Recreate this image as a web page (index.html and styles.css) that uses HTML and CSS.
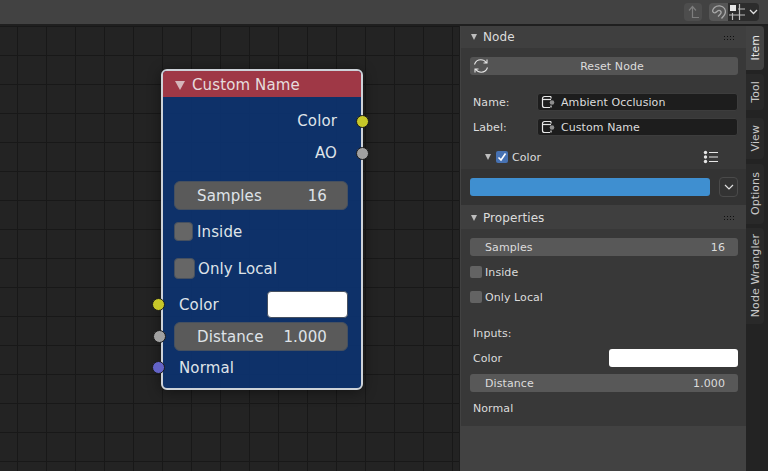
FILE: index.html
```html
<!DOCTYPE html>
<html lang="en">
<head>
<meta name="viewport" content="width=device-width, initial-scale=1">
<title>Node Editor</title>
<link rel="stylesheet" href="styles.css">
</head>
<body>
<svg class="defs" width="0" height="0">
    <symbol id="icon-node" viewBox="0 0 14 14">
        <path d="M10 1.5H3.5a2 2 0 0 0-2 2v7a2 2 0 0 0 2 2H9" fill="none" stroke="#e6e6e6" stroke-width="1.2"/>
        <path d="M2 4.5H10" fill="none" stroke="#e6e6e6" stroke-width="1.2"/>
        <path d="M10 1.5V3.5M10 10.5V12.5" fill="none" stroke="#e6e6e6" stroke-width="1.2"/>
        <circle cx="11" cy="7.5" r="2.3" fill="#8f8f8f"/>
    </symbol>
</svg>

<header class="topbar">
    <div class="btn-up">
        <svg width="18" height="18" viewBox="0 0 18 18"><path d="M5 7.5 8.5 3.5 12 7.5M8.5 3.5V14.5H15" fill="none" stroke="#7d7d7d" stroke-width="1.2"/></svg>
    </div>
    <div class="btn-group">
        <div class="btn-magnet">
            <svg width="19" height="18" viewBox="0 0 19 18"><path d="M12.5 15.5 15 12.5C16.5 10.5 17 8 15.5 5.5 13.5 2.5 8.5 2 5.5 4.5 3.5 6.5 3 8.5 4.5 9.5 6 10.5 7 9.5 8 8.5 9 7.5 10.500 7 11.500 8 12.500 9 12 10.500 11 11.500L9 13.500" fill="none" stroke="#a8a8a8" stroke-width="1.3"/></svg>
        </div>
        <div class="btn-snap">
            <svg width="18" height="18" viewBox="0 0 18 18"><rect x="2" y="2" width="6" height="6" fill="#e6e6e6"/><path d="M1 12H17M10 6H17M11.500 1V17M4.500 10V17" fill="none" stroke="#bdbdbd" stroke-width="1.2"/></svg>
            <svg width="9" height="6" viewBox="0 0 9 6"><path d="M1 1 4.500 4.500 8 1" fill="none" stroke="#e0e0e0" stroke-width="1.300"/></svg>
        </div>
    </div>
</header>

<div class="main">
    <div class="canvas">
        <div class="node">
            <div class="node-title"><span class="arrow-down node-arrow"></span>Custom Name</div>
            <div class="node-row node-right row-first">Color<span class="socket socket-out yellow"></span></div>
            <div class="node-row node-right">AO<span class="socket socket-out grey"></span></div>
            <div class="node-field field-first"><span>Samples</span><span class="field-num">16</span></div>
            <div class="node-check check-a"><span class="node-box"></span>Inside</div>
            <div class="node-check check-b"><span class="node-box box-big"></span>Only Local</div>
            <div class="node-color"><span>Color</span><span class="node-swatch"></span><span class="socket socket-in yellow"></span></div>
            <div class="node-field field-dist"><span>Distance</span><span class="field-num">1.000</span><span class="socket socket-in grey"></span></div>
            <div class="node-row node-left">Normal<span class="socket socket-in violet"></span></div>
        </div>
    </div>

    <aside class="sidebar">
        <section class="panel">
            <div class="panel-head"><span class="arrow-down"></span>Node<span class="grip"></span></div>
            <div class="panel-body body-node">
                <div class="button-wide">
                    <svg class="reset-icon" width="16" height="16" viewBox="0 0 16 16"><path d="M1.500 6.500C2.500 3.500 5 1.800 7.800 1.800 10 1.800 12 2.800 13.200 4.500M14.500 9.500C13.500 12.500 11 14.200 8.200 14.200 6 14.200 4 13.200 2.800 11.500M14 1.500V5H10.500M2 14.500V11H5.500" fill="none" stroke="#e6e6e6" stroke-width="1.100"/></svg>
                    Reset Node
                </div>
                <div class="prop-row row-name">
                    <span class="prop-label">Name:</span>
                    <div class="text-field"><svg class="field-icon"><use href="#icon-node"/></svg>Ambient Occlusion</div>
                </div>
                <div class="prop-row">
                    <span class="prop-label">Label:</span>
                    <div class="text-field"><svg class="field-icon"><use href="#icon-node"/></svg>Custom Name</div>
                </div>
                <div class="sub-head">
                    <span class="arrow-down"></span>
                    <span class="checkbox"><svg width="12" height="12" viewBox="0 0 12 12"><path d="M2.500 6.500 5 9 9.500 2.500" fill="none" stroke="#fff" stroke-width="1.600"/></svg></span>
                    Color
                    <svg class="list-icon" width="16" height="14" viewBox="0 0 16 14"><g fill="#e6e6e6"><circle cx="2.500" cy="2.500" r="1.700"/><circle cx="2.500" cy="7" r="1.700"/><circle cx="2.500" cy="11.500" r="1.700"/><rect x="6" y="2" width="9" height="1"/><rect x="6" y="6.500" width="9" height="1"/><rect x="6" y="11" width="9" height="1"/></g></svg>
                </div>
            </div>
            <div class="color-block">
                <div class="color-bar"></div>
                <div class="color-menu"><svg width="10" height="6" viewBox="0 0 10 6"><path d="M1 1 5 5 9 1" fill="none" stroke="#e0e0e0" stroke-width="1.200"/></svg></div>
            </div>
        </section>

        <section class="panel">
            <div class="panel-head head-props"><span class="arrow-down"></span>Properties<span class="grip"></span></div>
            <div class="panel-body body-props">
                <div class="slider"><span>Samples</span><span>16</span></div>
                <div class="check-row"><span class="box"></span>Inside</div>
                <div class="check-row"><span class="box"></span>Only Local</div>
                <div class="plain-row row-inputs">Inputs:</div>
                <div class="plain-row color-row">Color<span class="swatch"></span></div>
                <div class="slider"><span>Distance</span><span>1.000</span></div>
                <div class="plain-row">Normal</div>
            </div>
        </section>
    </aside>

    <nav class="tabs">
        <div class="tab tab-active tab-item"><span>Item</span></div>
        <div class="tab tab-tool"><span>Tool</span></div>
        <div class="tab tab-view"><span>View</span></div>
        <div class="tab tab-options"><span>Options</span></div>
        <div class="tab tab-wrangler"><span>Node Wrangler</span></div>
    </nav>
</div>
</body>
</html>
```

FILE: styles.css
```css
* {
    box-sizing: border-box;
}
html, body {
    margin: 0;
    height: 100%;
}
body {
    width: 768px;
    height: 471px;
    overflow: hidden;
    background-color: #232323;
    color: #dcdcdc;
    font-family: "DejaVu Sans", sans-serif;
    font-size: 11px;
    letter-spacing: 0.08px;
}
.defs {
    position: absolute;
}

/* top bar */
.topbar {
    height: 26px;
    background-color: #424242;
    border-bottom: 2px solid #1f1f1f;
    display: flex;
    justify-content: flex-end;
    align-items: center;
    padding: 0 9px 0 0;
}
.btn-up {
    width: 18px;
    height: 18px;
    background-color: #4d4d4d;
    border-radius: 4px;
    margin-right: 7px;
}
.btn-group {
    display: flex;
    height: 18px;
    border-radius: 4px;
    overflow: hidden;
}
.btn-magnet {
    width: 19px;
    background-color: #565656;
}
.btn-snap {
    width: 31px;
    background-color: #2c2c2c;
    display: flex;
    align-items: center;
    gap: 3px;
}
.topbar svg {
    display: block;
}

.main {
    display: flex;
    height: 445px;
}

/* node canvas */
.canvas {
    position: relative;
    width: 460px;
    border-right: 1px solid #1c1c1c;
    background-color: #232323;
    background-image:
        linear-gradient(to right, #181818 1px, transparent 1px),
        linear-gradient(to bottom, #181818 1px, transparent 1px);
    background-size: 29px 29px;
    background-position: 17px 0;
}
.node {
    position: absolute;
    left: 161px;
    top: 43px;
    width: 202px;
    height: 321px;
    border: 2px solid #cdd2d8;
    border-radius: 6px;
    background-color: rgba(13, 50, 107, 0.97);
    padding: 0 13px 0 11px;
    font-size: 15px;
    letter-spacing: 0.12px;
    color: #dfe3e8;
    box-shadow: 0 2px 14px rgba(0, 0, 0, 0.45);
}
.node-title {
    height: 26px;
    margin: 0 -13px 0 -11px;
    padding: 2px 0 0 12px;
    background-color: #9f3846;
    border-radius: 4px 4px 0 0;
    display: flex;
    align-items: center;
    color: #e6dcdd;
}
.node-title .node-arrow {
    margin: 0 7px 0 0;
    border-top-color: #d5b6ba;
    border-width: 9px 5px 0;
}
.node-row {
    position: relative;
    height: 32px;
    display: flex;
    align-items: center;
}
.row-first {
    margin-top: 8px;
}
.node-right {
    justify-content: flex-end;
    padding-right: 11px;
}
.node-left {
    height: 33px;
    padding-left: 5px;
}
.node-field {
    position: relative;
    height: 29px;
    background-color: #5a5a5a;
    border: 1px solid #46505f;
    border-radius: 6px;
    display: flex;
    justify-content: space-between;
    align-items: center;
    padding: 0 20px 0 22px;
}
.field-first {
    margin-top: 12px;
}
.field-dist {
    margin-top: 4px;
}
.node-check {
    display: flex;
    align-items: center;
}
.check-a {
    height: 19px;
    margin-top: 12px;
    gap: 4px;
}
.check-b {
    height: 21px;
    margin-top: 17px;
    gap: 3px;
}
.node-box {
    width: 19px;
    height: 19px;
    background-color: #666;
    border: 1px solid #46505f;
    border-radius: 4px;
}
.box-big {
    width: 21px;
    height: 21px;
}
.node-color {
    position: relative;
    height: 27px;
    margin-top: 12px;
    display: flex;
    justify-content: space-between;
    align-items: center;
    padding-left: 5px;
}
.node-swatch {
    width: 81px;
    height: 27px;
    background-color: #fff;
    border-radius: 4px;
    border: 1px solid #46505f;
}
.socket {
    position: absolute;
    top: 50%;
    width: 13px;
    height: 13px;
    margin-top: -6.500px;
    border-radius: 50%;
    border: 1px solid #1a1a1a;
}
.socket-out {
    right: -21px;
}
.socket-in {
    left: -22px;
}
.yellow {
    background-color: #c7c729;
}
.grey {
    background-color: #a1a1a1;
}
.violet {
    background-color: #6363c7;
}

/* sidebar */
.sidebar {
    width: 286px;
    background-color: #424242;
    padding-left: 1px;
}
.arrow-down {
    display: inline-block;
    width: 0;
    height: 0;
    border-style: solid;
    border-width: 6px 3.500px 0;
    border-color: #bdbdbd transparent transparent;
    flex-shrink: 0;
}
.panel-head {
    height: 22px;
    background-color: #3f3f3f;
    display: flex;
    align-items: center;
    padding: 0 12px 0 10px;
    font-size: 12px;
    gap: 6px;
    color: #dcdcdc;
}
.head-props {
    height: 24px;
    padding-top: 1px;
}
.grip {
    margin-left: auto;
    width: 11px;
    height: 5px;
    background-image: radial-gradient(circle, #0f0f0f 0.800px, transparent 1px);
    background-size: 3px 3px;
}
.panel-body {
    background-color: #383838;
    padding: 9px 8px 0 9px;
}
.body-node {
    height: 121px;
}
.body-props {
    height: 197px;
    display: flex;
    flex-direction: column;
    gap: 7px;
}
.button-wide {
    position: relative;
    height: 18px;
    background-color: #545454;
    border-radius: 3px;
    text-align: center;
    line-height: 19px;
    font-size: 11px;
    padding-left: 16px;
}
.reset-icon {
    position: absolute;
    left: 3px;
    top: 1px;
}
.prop-row {
    display: flex;
    align-items: center;
    height: 18px;
    margin-top: 7px;
}
.row-name {
    margin-top: 18px;
}
.prop-label {
    width: 67px;
    padding-left: 3px;
}
.text-field {
    flex: 1;
    height: 18px;
    background-color: #1d1d1d;
    border: 1px solid #3d3d3d;
    border-radius: 3px;
    display: flex;
    align-items: center;
    padding-left: 3px;
    gap: 6px;
}
.field-icon {
    width: 14px;
    height: 14px;
}
.sub-head {
    display: flex;
    align-items: center;
    height: 20px;
    margin-top: 11px;
    padding-left: 15px;
}
.sub-head .arrow-down {
    margin-right: 5px;
}
.checkbox {
    width: 12px;
    height: 12px;
    background-color: #4772b3;
    border-radius: 2px;
    margin-right: 4px;
}
.checkbox svg {
    display: block;
}
.list-icon {
    margin-left: auto;
    margin-right: 19px;
}
.color-block {
    height: 36px;
    background-color: #333;
    padding: 8px 8px 0 9px;
    display: flex;
    align-items: flex-start;
}
.color-bar {
    width: 240px;
    height: 18px;
    margin-top: 1px;
    background-color: #3f8fd0;
    border-radius: 3px;
}
.color-menu {
    width: 19px;
    height: 20px;
    margin-left: 9px;
    border: 1px solid #4a4a4a;
    border-radius: 4px;
    display: flex;
    justify-content: center;
    align-items: center;
}
.slider {
    height: 18px;
    flex-shrink: 0;
    background-color: #585858;
    border-radius: 3px;
    display: flex;
    justify-content: space-between;
    align-items: center;
    padding: 0 13px 0 15px;
}
.check-row {
    height: 18px;
    display: flex;
    align-items: center;
    gap: 3px;
    flex-shrink: 0;
}
.box {
    width: 12px;
    height: 12px;
    background-color: #636363;
    border-radius: 2px;
}
.plain-row {
    height: 18px;
    display: flex;
    align-items: center;
    justify-content: space-between;
    padding-left: 3px;
    flex-shrink: 0;
}
.row-inputs {
    margin-top: 11px;
}
.swatch {
    width: 129px;
    height: 18px;
    background-color: #fff;
    border-radius: 3px;
}

/* vertical tabs */
.tabs {
    width: 22px;
    background-color: #232323;
    display: flex;
    flex-direction: column;
}
.tab {
    width: 18px;
    background-color: #292929;
    border-radius: 0 4px 4px 0;
    display: flex;
    justify-content: center;
    align-items: center;
    color: #c8c8c8;
}
.tab span {
    writing-mode: vertical-rl;
    transform: rotate(180deg);
    white-space: nowrap;
}
.tab-active {
    background-color: #424242;
    color: #e6e6e6;
}
.tab-item {
    height: 44px;
}
.tab-tool {
    height: 36px;
    margin-top: 4px;
}
.tab-view {
    height: 41px;
    margin-top: 8px;
}
.tab-options {
    height: 60px;
    margin-top: 5px;
}
.tab-wrangler {
    height: 96px;
    margin-top: 4px;
}
```
